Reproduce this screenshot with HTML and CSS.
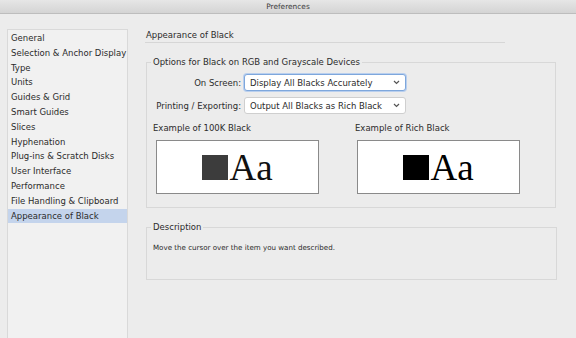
FILE: index.html
```html
<!DOCTYPE html>
<html>
<head>
<meta charset="utf-8">
<link rel="stylesheet" href="styles.css">
</head>
<body>
<div class="titlebar">Preferences</div>
<div class="content">
  <ul class="sidebar">
    <li>General</li>
    <li>Selection &amp; Anchor Display</li>
    <li>Type</li>
    <li>Units</li>
    <li>Guides &amp; Grid</li>
    <li>Smart Guides</li>
    <li>Slices</li>
    <li>Hyphenation</li>
    <li>Plug-ins &amp; Scratch Disks</li>
    <li>User Interface</li>
    <li>Performance</li>
    <li>File Handling &amp; Clipboard</li>
    <li class="selected">Appearance of Black</li>
  </ul>
  <div class="main">
    <div class="heading">Appearance of Black</div>
    <fieldset class="group options">
      <legend>Options for Black on RGB and Grayscale Devices</legend>
      <div class="form">
        <label class="lbl">On Screen:</label>
        <div class="select focused"><span>Display All Blacks Accurately</span><svg class="chev" width="7" height="5" viewBox="0 0 7 5"><polyline points="1,1 3.5,3.5 6,1" fill="none" stroke="#555" stroke-width="1.2"/></svg></div>
        <label class="lbl">Printing / Exporting:</label>
        <div class="select"><span>Output All Blacks as Rich Black</span><svg class="chev" width="7" height="5" viewBox="0 0 7 5"><polyline points="1,1 3.5,3.5 6,1" fill="none" stroke="#555" stroke-width="1.2"/></svg></div>
      </div>
      <div class="examples">
        <div class="example">
          <div class="ex-label">Example of 100K Black</div>
          <div class="ex-box"><span class="swatch k100"></span><span class="aa k100-text">Aa</span></div>
        </div>
        <div class="example second">
          <div class="ex-label">Example of Rich Black</div>
          <div class="ex-box"><span class="swatch rich"></span><span class="aa">Aa</span></div>
        </div>
      </div>
    </fieldset>
    <fieldset class="group desc">
      <legend>Description</legend>
      <p class="desc-text">Move the cursor over the item you want described.</p>
    </fieldset>
  </div>
</div>
</body>
</html>
```

FILE: styles.css
```css
html, body {
  margin: 0;
  padding: 0;
}
body {
  width: 576px;
  height: 338px;
  overflow: hidden;
  background: #ececec;
  font-family: "DejaVu Sans", "Lucida Grande", sans-serif;
  font-size: 8.5px;
  color: #2b2b2b;
}
.titlebar {
  height: 13px;
  line-height: 13px;
  text-align: center;
  font-size: 7.4px;
  color: #3a3a3a;
  background: linear-gradient(#e6e6e6, #d4d4d4);
  border-bottom: 1px solid #bdbdbd;
}
.content {
  display: flex;
  padding-top: 15px;
  align-items: flex-start;
}
.sidebar {
  box-sizing: border-box;
  list-style: none;
  margin: 0 0 0 7px;
  padding: 1px 0 0 0;
  width: 121px;
  height: 309px;
  background: #f1f1f1;
  border: 1px solid #d9d9d9;
  border-bottom: none;
}
.sidebar li {
  line-height: 14.8px;
  height: 14.8px;
  padding-left: 3px;
  white-space: nowrap;
}
.sidebar li.selected {
  background: #c4d4ec;
}
.main {
  margin-left: 17px;
  width: 411px;
}
.heading {
  width: 359px;
  line-height: 12px;
  padding: 0 0 1px 1px;
  border-bottom: 1px solid #d6d6d6;
}
.group {
  margin: 13px 0 0 1px;
  padding: 6px 6px 13px 6px;
  border: 1px solid #d8d8d8;
  width: 396px;
  min-width: 0;
}
.group legend {
  padding: 0 2px;
  margin-left: -2px;
  line-height: 12px;
}
.form {
  display: grid;
  grid-template-columns: 88px 162px;
  column-gap: 3px;
  row-gap: 6px;
  align-items: center;
}
.lbl {
  text-align: right;
  white-space: nowrap;
}
.select {
  box-sizing: border-box;
  height: 17px;
  background: #fff;
  border: 1px solid #cfcfcf;
  border-radius: 3px;
  display: flex;
  align-items: center;
  justify-content: space-between;
  padding: 0 5px 0 5px;
  white-space: nowrap;
}
.select.focused {
  border-color: #7ea7dc;
  box-shadow: 0 0 0 1px #b9cfee;
}
.chev {
  display: block;
}
.examples {
  display: flex;
  margin-top: 8px;
}
.example {
  flex: 0 0 202px;
}
.example.second {
  flex: 0 0 170px;
}
.ex-label {
  line-height: 12px;
  white-space: nowrap;
}
.ex-box {
  box-sizing: border-box;
  margin: 6px 0 0 3px;
  width: 163px;
  height: 54px;
  background: #fff;
  border: 1px solid #8a8a8a;
  display: flex;
  justify-content: center;
  align-items: flex-end;
  padding-bottom: 13px;
}
.example.second .ex-box {
  margin-left: 2px;
}
.swatch {
  display: block;
  width: 26px;
  height: 25px;
  margin-right: 1px;
}
.swatch.k100 {
  background: #3c3c3c;
}
.swatch.rich {
  background: #000;
}
.aa {
  font-family: "Liberation Serif", "Times New Roman", serif;
  font-size: 37px;
  line-height: 25px;
  height: 25px;
  color: #000;
  display: block;
}
.aa.k100-text {
  color: #111;
}
.group.desc {
  margin-top: 13px;
  padding: 0 6px 0 6px;
  height: 57px;
  width: 397px;
}
.desc-text {
  margin: 9px 0 0 0;
  font-size: 7.1px;
  line-height: 11px;
}
```
